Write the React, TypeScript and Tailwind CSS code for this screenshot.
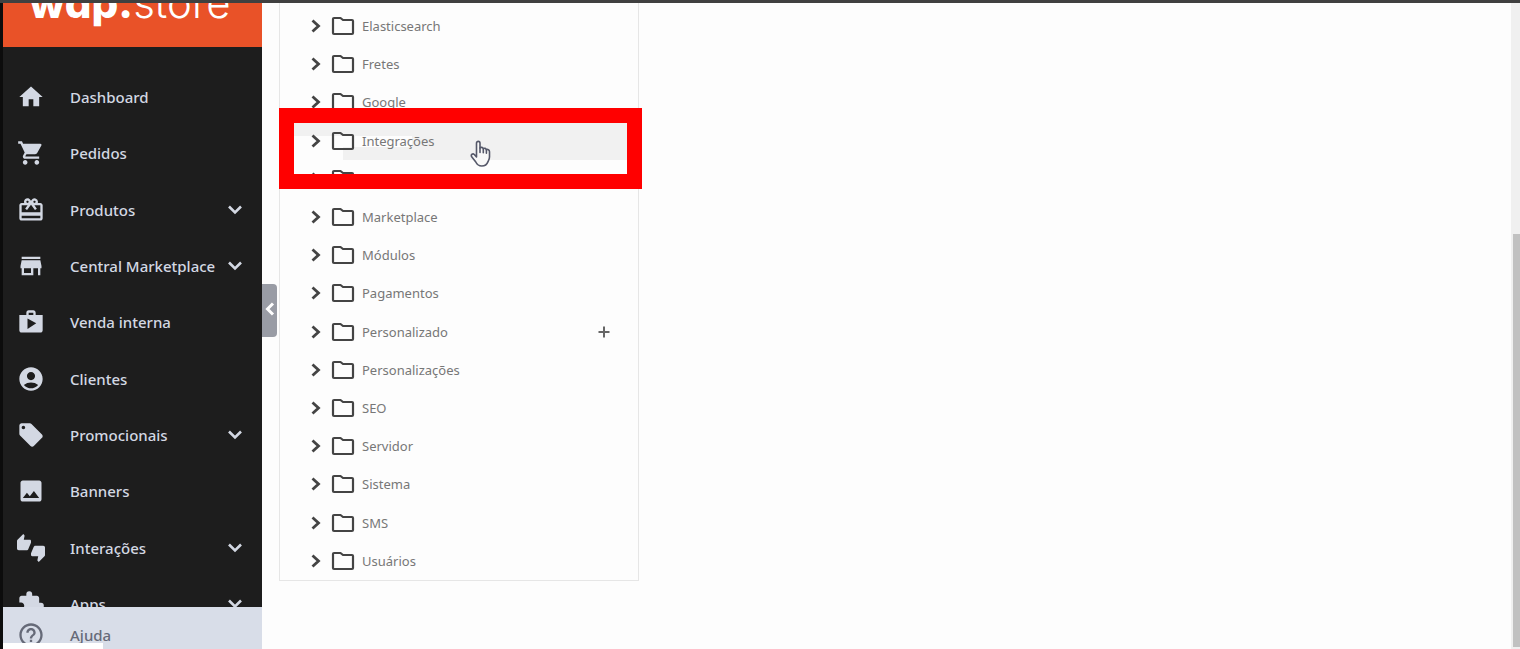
import {
  MdAccountCircle,
  MdExtension,
  MdHelpOutline,
  MdHome,
  MdImage,
  MdLocalOffer,
  MdRedeem,
  MdShop,
  MdShoppingCart,
  MdStore,
  MdThumbsUpDown,
} from 'react-icons/md';

const navItems = [
  { label: 'Dashboard', icon: MdHome },
  { label: 'Pedidos', icon: MdShoppingCart },
  { label: 'Produtos', icon: MdRedeem, expandable: true },
  { label: 'Central Marketplace', icon: MdStore, expandable: true },
  { label: 'Venda interna', icon: MdShop },
  { label: 'Clientes', icon: MdAccountCircle },
  { label: 'Promocionais', icon: MdLocalOffer, expandable: true },
  { label: 'Banners', icon: MdImage },
  { label: 'Interações', icon: MdThumbsUpDown, expandable: true },
  { label: 'Apps', icon: MdExtension, expandable: true },
];

const folders = [
  'Elasticsearch',
  'Fretes',
  'Google',
  'Integrações',
  'Lojas',
  'Marketplace',
  'Módulos',
  'Pagamentos',
  'Personalizado',
  'Personalizações',
  'SEO',
  'Servidor',
  'Sistema',
  'SMS',
  'Usuários',
];

// hovered row, only partly repainted behind the icon and label
const hoverRow =
  'flex bg-[#f1f1f1] bg-[linear-gradient(#fdfdfd,#fdfdfd),linear-gradient(#fdfdfd,#fdfdfd)] bg-no-repeat [background-position:0_14px,0_14px] [background-size:132px_11px,63px_25px]';

function ChevronDown() {
  return (
    <svg viewBox="0 0 14 10" className="h-[10px] w-[14px] shrink-0" fill="none" stroke="currentColor" strokeWidth="2.6">
      <path d="M1 1.5 7 7.5 13 1.5" />
    </svg>
  );
}

function ChevronRight() {
  return (
    <svg viewBox="0 0 10 14" className="h-[14px] w-[10px] shrink-0" fill="none" stroke="currentColor" strokeWidth="2.8">
      <path d="M1.5 1.5 7.5 7 1.5 12.5" />
    </svg>
  );
}

function FolderIcon() {
  return (
    <svg viewBox="0 0 24 20" className="h-5 w-6 shrink-0" fill="none" stroke="currentColor" strokeWidth="2.2" strokeLinejoin="round">
      <path d="M3 2h6.500l2.500 2h9q1 0 1 1v12q0 1-1 1H3q-1 0-1-1V3q0-1 1-1z" />
    </svg>
  );
}

function HandCursor() {
  return (
    <svg viewBox="0 0 22 28" className="h-7 w-[22px]" fill="#f8f8f8" stroke="#555869" strokeWidth="1.6" strokeLinejoin="round" strokeLinecap="round">
      <path d="M6.5 17V3.200c0-2.400 3.500-2.400 3.500 0V8c1-1 3-.8 3.300.7 1-.8 2.800-.4 3 1 1.200-.7 3.200 0 3.200 2v5.300c0 2-.8 3.300-1.500 4.600-1.100 3-3 4.400-6.200 4.400-3 0-4.800-1.400-6-4L1.500 16.500c-.8-2 1.300-3.300 2.800-2z" />
      <path d="M10 8v4.500M13.300 8.700v4M16.400 9.700v3.500" fill="none" />
    </svg>
  );
}

function Sidebar() {
  return (
    <aside className="flex w-[262px] shrink-0 flex-col border-l-3 border-[#0c0c0c] bg-[#1d1d1d] text-[#d3d8e3]">
      <div className="flex h-11 shrink-0 items-end overflow-hidden bg-[#e95228] pb-5 pl-[26px] text-white">
        <a href="#" className="font-[Inter,sans-serif] text-[42px] leading-[48px] whitespace-nowrap [font-feature-settings:'cv11']">
          <span className="font-extrabold">wap.</span>
          <span className="font-light">store</span>
        </a>
      </div>
      <nav className="min-h-0 flex-1 overflow-hidden pt-[22px]">
        <ul className="grid h-[563px] auto-rows-fr">
          {navItems.map(({ label, icon: Icon, expandable }) => (
            <li key={label}>
              <a href="#" className="flex h-full items-center pr-5 pl-[14px]">
                <Icon className="size-7 shrink-0" />
                <span className="flex-1 pl-[25px] text-[15px] leading-5 font-medium whitespace-nowrap">{label}</span>
                {expandable && <ChevronDown />}
              </a>
            </li>
          ))}
        </ul>
      </nav>
      <div className="relative h-[42px] shrink-0 overflow-hidden bg-[#d8dde8] text-[#666a78]">
        <a href="#" className="flex h-14 items-center pl-[14px]">
          <MdHelpOutline className="size-7 shrink-0" />
          <span className="pl-[25px] text-[15px] leading-5 font-medium">Ajuda</span>
        </a>
        <div className="absolute bottom-0 left-0 h-[6px] w-[100px] bg-white" />
      </div>
    </aside>
  );
}

function FolderTree() {
  return (
    <section className="relative w-[360px] self-start border border-t-0 border-[#e6e6e6] pt-1">
      <ul className="grid h-[573px] auto-rows-fr">
        {folders.map((name) => (
          <li key={name} className={name === 'Integrações' ? hoverRow : 'flex'}>
            <button className="flex flex-1 items-center pl-[31px] text-left text-[#444]">
              <ChevronRight />
              <span className="pl-[10px]"><FolderIcon /></span>
              <span className="pl-[7px] text-[13px] leading-5 text-[#777]">{name}</span>
            </button>
            {name === 'Personalizado' && (
              <button aria-label="Adicionar" className="pr-[27px] text-[#666]">
                <svg viewBox="0 0 14 14" className="size-[14px]" stroke="currentColor" strokeWidth="2">
                  <path d="M7 1.500v11M1.500 7h11" />
                </svg>
              </button>
            )}
          </li>
        ))}
      </ul>
      <div className="absolute top-[105px] -left-px h-[81px] w-[363px] border-[15px] border-[#f00]" />
      <div className="absolute top-[137px] left-[190px]">
        <HandCursor />
      </div>
    </section>
  );
}

export default function App() {
  return (
    <div className="flex h-screen overflow-hidden border-t-3 border-[#404040] bg-[#fdfdfd] font-['Noto_Sans',sans-serif]">
      <Sidebar />
      <button aria-label="Recolher menu" className="mt-[281px] flex h-[53px] w-[15px] shrink-0 items-center justify-center rounded-r-sm bg-[#999ca5] pb-1 text-white">
        <svg viewBox="0 0 10 14" className="h-[14px] w-[10px]" fill="none" stroke="currentColor" strokeWidth="3">
          <path d="M8 1.500 2.500 7 8 12.500" />
        </svg>
      </button>
      <main className="flex min-w-0 flex-1 pl-[2px]">
        <FolderTree />
      </main>
      <div className="flex w-[9px] shrink-0 flex-col bg-[#f0f0f0] pt-[231px] pb-[2px] pl-[2px]">
        <div className="flex-1 bg-[#c1c1c1]" />
      </div>
    </div>
  );
}
